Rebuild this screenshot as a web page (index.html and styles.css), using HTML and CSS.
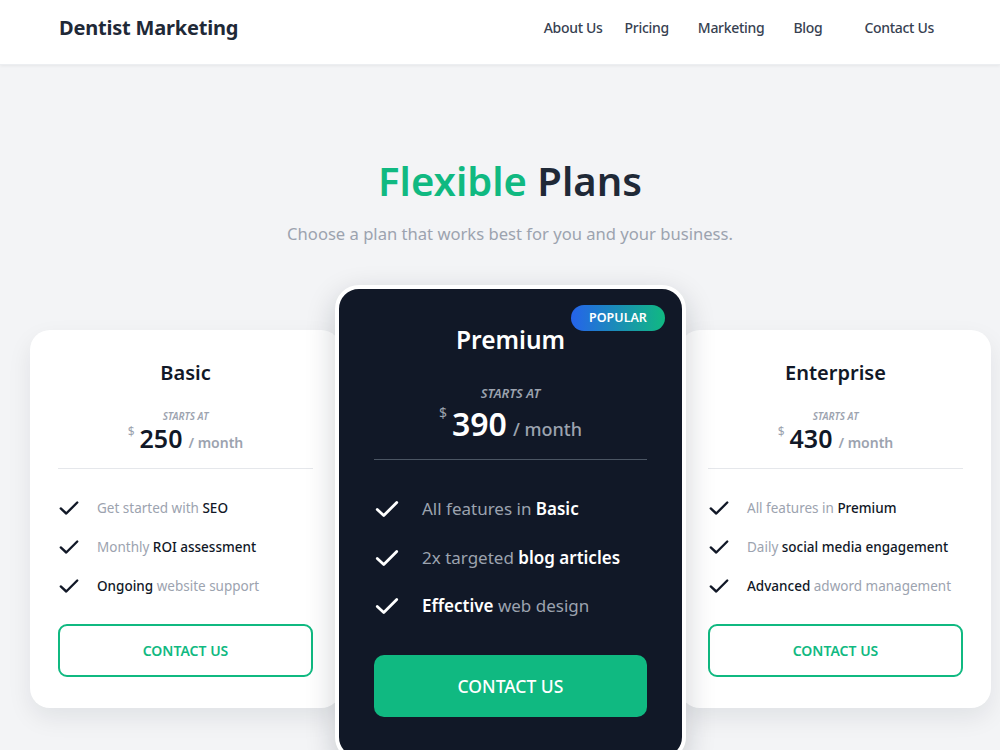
FILE: index.html
```html
<!DOCTYPE html>
<html lang="en">
<head>
<meta charset="utf-8">
<title>Dentist Marketing - Pricing</title>
<link rel="stylesheet" href="styles.css">
</head>
<body>
<header class="topbar">
  <div class="brand">Dentist Marketing</div>
  <nav class="nav">
    <a class="nav-link nav-about" href="#">About Us</a>
    <a class="nav-link" href="#">Pricing</a>
    <a class="nav-link" href="#">Marketing</a>
    <a class="nav-link" href="#">Blog</a>
    <a class="nav-link nav-contact" href="#">Contact Us</a>
  </nav>
</header>

<main class="pricing">
  <h1 class="title"><span class="accent">Flexible</span> Plans</h1>
  <p class="subtitle">Choose a plan that works best for you and your business.</p>

  <div class="plans">
    <section class="plan plan-side plan-left">
      <h2 class="plan-name">Basic</h2>
      <div class="starts">STARTS AT</div>
      <div class="price"><span class="cur">$</span><span class="amount">250</span><span class="per">/ month</span></div>
      <hr class="divider">
      <ul class="features">
        <li><svg class="check" viewBox="0 0 24 24"><polyline points="3,12.5 9,18 21,6"/></svg><span><span class="muted">Get started with</span> SEO</span></li>
        <li><svg class="check" viewBox="0 0 24 24"><polyline points="3,12.5 9,18 21,6"/></svg><span><span class="muted">Monthly</span> ROI assessment</span></li>
        <li><svg class="check" viewBox="0 0 24 24"><polyline points="3,12.5 9,18 21,6"/></svg><span>Ongoing <span class="muted">website support</span></span></li>
      </ul>
      <a class="btn btn-outline" href="#">CONTACT US</a>
    </section>

    <section class="plan plan-featured">
      <span class="badge">POPULAR</span>
      <h2 class="plan-name">Premium</h2>
      <div class="starts">STARTS AT</div>
      <div class="price"><span class="cur">$</span><span class="amount">390</span><span class="per">/ month</span></div>
      <hr class="divider">
      <ul class="features">
        <li><svg class="check" viewBox="0 0 24 24"><polyline points="3,12.5 9,18 21,6"/></svg><span><span class="muted">All features in</span> Basic</span></li>
        <li><svg class="check" viewBox="0 0 24 24"><polyline points="3,12.5 9,18 21,6"/></svg><span><span class="muted">2x targeted</span> blog articles</span></li>
        <li><svg class="check" viewBox="0 0 24 24"><polyline points="3,12.5 9,18 21,6"/></svg><span>Effective <span class="muted">web design</span></span></li>
      </ul>
      <a class="btn btn-solid" href="#">CONTACT US</a>
    </section>

    <section class="plan plan-side plan-right">
      <h2 class="plan-name">Enterprise</h2>
      <div class="starts">STARTS AT</div>
      <div class="price"><span class="cur">$</span><span class="amount">430</span><span class="per">/ month</span></div>
      <hr class="divider">
      <ul class="features">
        <li><svg class="check" viewBox="0 0 24 24"><polyline points="3,12.5 9,18 21,6"/></svg><span><span class="muted">All features in</span> Premium</span></li>
        <li><svg class="check" viewBox="0 0 24 24"><polyline points="3,12.5 9,18 21,6"/></svg><span><span class="muted">Daily</span> social media engagement</span></li>
        <li><svg class="check" viewBox="0 0 24 24"><polyline points="3,12.5 9,18 21,6"/></svg><span>Advanced <span class="muted">adword management</span></span></li>
      </ul>
      <a class="btn btn-outline" href="#">CONTACT US</a>
    </section>
  </div>
</main>
</body>
</html>
```

FILE: styles.css
```css
* { box-sizing: border-box; }

html, body {
  margin: 0;
  padding: 0;
  height: 100%;
  overflow: hidden;
}

body {
  background: #f3f4f6;
  font-family: "Noto Sans", "Open Sans", sans-serif;
  color: #111827;
}

.topbar {
  height: 65px;
  background: #ffffff;
  display: flex;
  align-items: center;
  justify-content: space-between;
  padding: 0 66px 10px 59px;
  box-shadow: 0 1px 3px rgba(0, 0, 0, 0.06);
  border-bottom: 1px solid #eceef1;
}

.brand {
  font-size: 20px;
  font-weight: 700;
  color: #1f2937;
  letter-spacing: -0.2px;
}

.nav {
  display: flex;
  gap: 29px;
}

.nav-link {
  font-size: 14px;
  font-weight: 500;
  color: #374151;
  text-decoration: none;
  letter-spacing: -0.3px;
}

.nav-about { margin-right: -7px; }
.nav-contact { margin-left: 13px; }

.pricing {
  display: flex;
  flex-direction: column;
  align-items: center;
}

.title {
  margin: 90px 0 0 20px;
  font-size: 40px;
  font-weight: 600;
  line-height: 52px;
  color: #1f2937;
}

.accent { color: #10b981; }

.subtitle {
  margin: 15px 0 0 20px;
  font-size: 16.6px;
  color: #9ca3af;
  line-height: 24px;
}

.plans {
  display: flex;
  align-items: flex-start;
  margin-top: 39px;
  margin-left: 21px;
}

.plan {
  display: flex;
  flex-direction: column;
  align-items: stretch;
  text-align: center;
}

.plan-side {
  width: 311px;
  background: #ffffff;
  border-radius: 20px;
  padding: 29px 28px 31px;
  margin-top: 45px;
  box-shadow: 0 10px 25px rgba(17, 24, 39, 0.08);
}

.plan-left { margin-right: -6px; }
.plan-right { margin-left: -6px; }

.plan-featured {
  position: relative;
  z-index: 2;
  width: 351px;
  background: #111827;
  border: 4px solid #ffffff;
  border-radius: 24px;
  padding: 34px 35px 40px;
  color: #ffffff;
  box-shadow: 0 10px 30px rgba(17, 24, 39, 0.2);
}

.badge {
  position: absolute;
  top: 16px;
  right: 17px;
  width: 94px;
  height: 26px;
  border-radius: 13px;
  background: linear-gradient(90deg, #2563eb 0%, #10b981 100%);
  color: #ffffff;
  font-size: 12.5px;
  font-weight: 600;
  line-height: 26px;
  text-align: center;
}

.plan-name {
  margin: 0;
  font-size: 20px;
  font-weight: 600;
  line-height: 28px;
}

.plan-featured .plan-name {
  font-size: 24.5px;
  line-height: 34px;
}

.starts {
  margin-top: 22px;
  font-size: 10px;
  font-style: italic;
  font-weight: 600;
  color: #9ca3af;
  line-height: 14px;
}

.plan-featured .starts {
  margin-top: 27px;
  font-size: 13px;
  line-height: 18px;
}

.price {
  display: flex;
  justify-content: center;
  align-items: baseline;
  line-height: 30px;
}

.cur {
  font-size: 12px;
  color: #9ca3af;
  align-self: flex-start;
  margin-right: 5px;
  line-height: 18px;
}

.amount {
  font-size: 25px;
  font-weight: 600;
  color: #111827;
}

.per {
  margin-left: 6px;
  font-size: 14px;
  font-weight: 600;
  color: #9ca3af;
}

.plan-featured .price { line-height: 40px; margin-top: 2px; }
.plan-featured .cur { font-size: 14px; line-height: 18px; }
.plan-featured .amount { font-size: 32px; color: #ffffff; }
.plan-featured .per { font-size: 18px; font-weight: 500; }

.divider {
  margin: 10px 0 0;
  border: 0;
  border-top: 1px solid #e5e7eb;
}

.plan-featured .divider {
  margin-top: 10px;
  border-top-color: #4b5563;
}

.features {
  list-style: none;
  margin: 28px 0 0;
  padding: 0;
  display: flex;
  flex-direction: column;
  gap: 17px;
  text-align: left;
}

.features li {
  display: flex;
  align-items: center;
  gap: 17px;
  font-size: 13.5px;
  font-weight: 500;
  line-height: 20px;
  color: #111827;
}

.muted { color: #9ca3af; font-weight: 400; }

.check {
  width: 22px;
  height: 22px;
  flex: none;
  fill: none;
  stroke: #111827;
  stroke-width: 2.6;
  stroke-linecap: round;
  stroke-linejoin: round;
}

.plan-featured .features {
  margin-top: 36px;
  gap: 22.5px;
}

.plan-featured .features li {
  font-size: 17px;
  line-height: 24px;
  gap: 22px;
  color: #ffffff;
  font-weight: 600;
}

.plan-featured .check {
  width: 26px;
  height: 26px;
  stroke: #ffffff;
}

.btn {
  display: block;
  text-decoration: none;
  font-weight: 600;
  text-align: center;
}

.btn-outline {
  margin-top: 27px;
  height: 53px;
  line-height: 49px;
  border: 2px solid #10b981;
  border-radius: 9px;
  color: #10b981;
  font-size: 14px;
}

.btn-solid {
  margin-top: 36px;
  height: 62px;
  line-height: 62px;
  background: #10b981;
  border-radius: 10px;
  color: #ffffff;
  font-size: 17.5px;
  font-weight: 500;
}
```
